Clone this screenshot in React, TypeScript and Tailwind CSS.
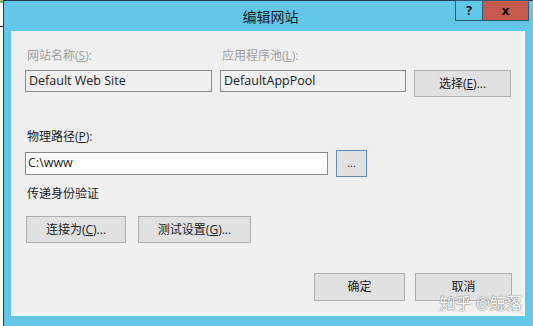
export default function App() {
	const ui = '"Open Sans", "Noto Sans CJK SC", sans-serif'
	return (
		<div className="flex h-[326px] w-[533px] overflow-hidden bg-white" style={{ fontFamily: ui }}>
			{/* desktop behind the window */}
			<div className="relative w-[3px] shrink-0 bg-white">
				<div className="absolute left-0 top-0 h-[3px] w-[3px] rounded-full bg-[#5fa83b]" />
				<div className="absolute left-0 top-[26px] h-px w-[3px] bg-[#333]" />
			</div>

			{/* window */}
			<div className="relative flex min-w-0 flex-1 flex-col border-l border-t border-[#1d3b4c] bg-[#63c7e8]">
				{/* title bar */}
				<div className="relative flex h-[30px] shrink-0 items-center justify-center">
					<span className="pl-[4px] text-[14px] text-[#1b1b1b]">编辑网站</span>
					<div className="absolute right-[4px] top-[-1px] flex h-[21px]">
						<div className="flex w-[28px] items-center justify-center border border-[#2c5a72] bg-[#63c7e8] text-[12px] font-bold text-[#111]">
							?
						</div>
						<div className="flex w-[46px] items-center justify-center border-y border-r border-[#2c5a72] bg-[#c75a4f] text-[13px] font-bold text-black">
							x
						</div>
					</div>
				</div>

				{/* client area */}
				<div className="mb-[10px] ml-[7px] mr-[8px] flex flex-1 flex-col border-b-2 border-r-2 border-[#f9f9f9] bg-[#f0f0f0] px-[14px] text-[12px] text-[#1a1a1a]">
					<div className="mt-[16px] flex">
						<div className="w-[195px] pl-[2px] text-[#9d9d9d]">
							网站名称(<span className="underline">S</span>):
						</div>
						<div className="pl-[2px] text-[#9d9d9d]">
							应用程序池(<span className="underline">L</span>):
						</div>
					</div>
					<div className="mt-[5px] flex items-start">
						<div className="flex h-[22px] w-[187px] shrink-0 items-center border border-[#8a8a8a] bg-[#f0f0f0] pl-[3px] text-[12.5px]">
							Default Web Site
						</div>
						<div className="ml-[8px] flex h-[22px] w-[186px] shrink-0 items-center border border-[#8a8a8a] bg-[#f0f0f0] pl-[3px] text-[12.5px]">
							DefaultAppPool
						</div>
						<button className="ml-[8px] flex h-[27px] w-[97px] shrink-0 items-center justify-center border border-[#acacac] bg-[#e1e1e1]">
							选择(<span className="underline">E</span>)...
						</button>
					</div>

					<div className="mt-[31px] pl-[2px]">
						物理路径(<span className="underline">P</span>):
					</div>
					<div className="mt-[4px] flex items-center">
						<div className="flex h-[23px] w-[303px] shrink-0 items-center border border-[#8a8a8a] bg-white pl-[2px] text-[12.5px]">
							C:\www
						</div>
						<button className="ml-[8px] flex h-[27px] w-[31px] shrink-0 items-center justify-center border border-[#5d8db5] bg-[#e1e1e1] text-[11px]">
							...
						</button>
					</div>

					<div className="mt-[8px] pl-[2px]">传递身份验证</div>

					<div className="mt-[13px] flex">
						<button className="ml-[1px] flex h-[27px] w-[100px] shrink-0 items-center justify-center border border-[#acacac] bg-[#e1e1e1]">
							连接为(<span className="underline">C</span>)...
						</button>
						<button className="ml-[12px] flex h-[27px] w-[113px] shrink-0 items-center justify-center border border-[#acacac] bg-[#e1e1e1]">
							测试设置(<span className="underline">G</span>)...
						</button>
					</div>

					<div className="mr-[-3px] mt-[30px] flex justify-end">
						<button className="flex h-[28px] w-[91px] shrink-0 items-center justify-center border border-[#acacac] bg-[#e1e1e1]">
							确定
						</button>
						<button className="ml-[10px] flex h-[28px] w-[97px] shrink-0 items-center justify-center border border-[#acacac] bg-[#e1e1e1]">
							取消
						</button>
					</div>
				</div>

				{/* watermark */}
				<div className="absolute bottom-[13px] right-[11px] text-[16px] leading-[20px] text-white [text-shadow:0_0_1px_#666,0_0_1px_#666]">
					知乎 @鲸落
				</div>
			</div>
		</div>
	)
}
